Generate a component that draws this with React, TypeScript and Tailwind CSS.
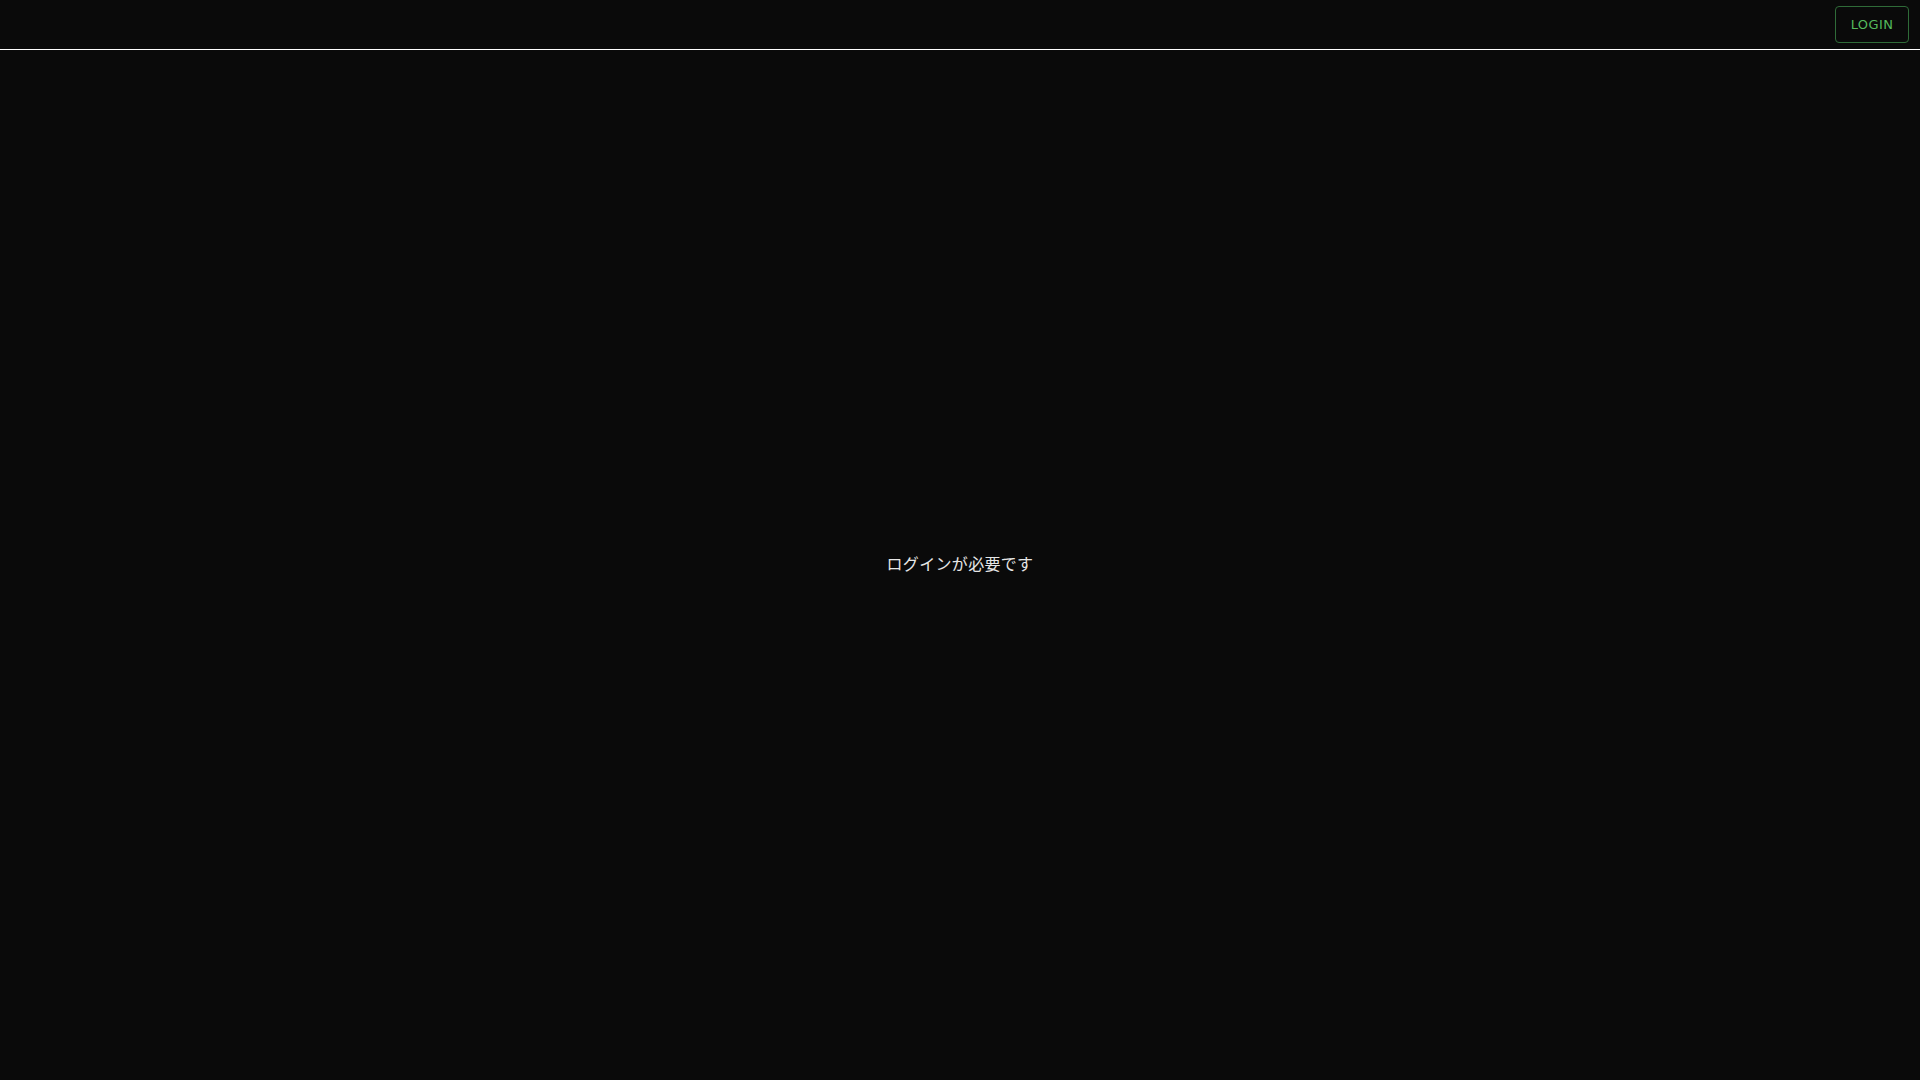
export default function App() {
  return (
    <div className="flex h-screen w-full flex-col bg-[#0a0a0a] font-['Lato','Noto_Sans_CJK_JP',sans-serif]">
      <header className="flex h-[50px] shrink-0 items-center justify-end border-b border-white pr-[11px]">
        <button
          type="button"
          className="flex h-[37px] w-[74px] items-center justify-center rounded-[4px] border border-[#2f6b38] text-[13px] tracking-[0.03em] text-[#55b95c]"
          style={{ fontFamily: "'DejaVu Sans', sans-serif" }}
        >
          LOGIN
        </button>
      </header>
      <main className="flex flex-1 items-center justify-center pb-[4px]">
        <p className="text-[16px] tracking-[0.02em] text-[#e6e6e6] font-['Noto_Sans_CJK_JP',sans-serif]">
          ログインが必要です
        </p>
      </main>
    </div>
  );
}
